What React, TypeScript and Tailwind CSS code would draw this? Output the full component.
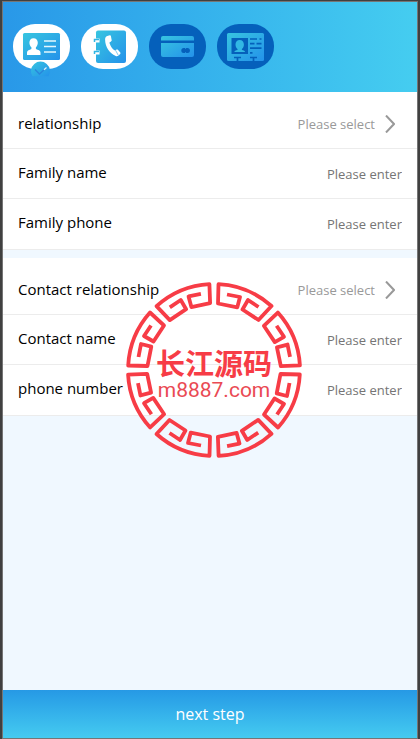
import type { ReactNode } from "react";

function IconGradient({ id }: { id: string }) {
  return (
    <defs>
      <linearGradient id={id} x1="0" y1="0" x2="1" y2="1">
        <stop offset="0" stopColor="#37c5e0" />
        <stop offset="1" stopColor="#2492ea" />
      </linearGradient>
    </defs>
  );
}

function IdCardIcon() {
  return (
    <svg viewBox="0 0 57 53" className="block h-[53px] w-[57px]" aria-hidden="true">
      <IconGradient id="g-id" />
      <rect x="10" y="9" width="37" height="27" rx="1.5" fill="url(#g-id)" />
      <path
        d="M20.5 14.2c2.700 0 4.300 2 4.300 4.600 0 1.900-.8 3.500-1.900 4.500v1.700c2.300.9 4.600 1.600 4.600 3.400V31H14v-2.600c0-1.800 2.300-2.500 4.400-3.400v-1.700c-1.200-1-2-2.600-2-4.500 0-2.600 1.500-4.600 4.100-4.600z"
        fill="#fff"
      />
      <path d="M31 17h12M31 22.500h12M31 28h12" stroke="#e4f7fd" strokeWidth="1.600" />
      <path d="M19.500 52.200a9.500 9.500 0 1 1 16 0z" fill="url(#g-id)" />
      <path d="M22 45.500l4.500 4.500 7-6.500" fill="none" stroke="#2a86dc" strokeWidth="1.300" />
      <path d="M31 45.800l2.500-2.300" stroke="#d8f4fb" strokeWidth="1.300" />
    </svg>
  );
}

function PhoneBookIcon() {
  return (
    <svg viewBox="0 0 57 45" className="block h-[45px] w-[57px]" aria-hidden="true">
      <IconGradient id="g-phone" />
      <path d="M17 6.500h26a2 2 0 0 1 2 2V37a2 2 0 0 1-2 2H17a2 2 0 0 1-2-2V8.500a2 2 0 0 1 2-2z" fill="url(#g-phone)" />
      <path d="M13.500 14.500h5v4h-5zM13.500 26.500h5v4h-5z" fill="#fff" />
      <path d="M18 15.500h-4.500v2.500M18 27.500h-4.500V30" fill="none" stroke="#31b6e4" strokeWidth="1.500" />
      <path
        d="M26.200 12l2.700-.8c.6 0 .9.300 1 .8l.8 4.200c0 .7-.2 1-.7 1.300l-1.500.9c.7 3.700 2.700 6.400 5.500 8.200l1.500-1c.5-.3 1-.3 1.400.1l2.400 2.900c.3.500.3 1-.1 1.300l-2 1.900c-.8.5-1.600.5-2.500.1-6.200-2.700-10.600-9.300-10.600-16.500 0-1.800.7-2.900 2.100-3.400z"
        fill="#fff"
      />
      <path d="M31.200 17.500l-2.600 1.600M34.500 26.200l2.700 5" stroke="#2ea6e6" strokeWidth=".6" />
    </svg>
  );
}

function BankCardIcon() {
  return (
    <svg viewBox="0 0 57 45" className="block h-[45px] w-[57px]" aria-hidden="true">
      <IconGradient id="g-bank" />
      <rect x="12" y="12" width="33" height="21" rx="2" fill="url(#g-bank)" />
      <path d="M12 17.800h33" stroke="#0560bb" strokeWidth="2.400" />
      <rect x="32.300" y="24" width="8.600" height="5" rx="2.500" fill="#0560bb" />
      <path d="M36.600 24v.8M36.600 28.200v.8" stroke="#2a9be6" strokeWidth="1" />
    </svg>
  );
}

function LicenseIcon() {
  return (
    <svg viewBox="0 0 57 45" className="block h-[45px] w-[57px]" aria-hidden="true">
      <IconGradient id="g-license" />
      <rect x="10" y="9" width="37" height="28" rx="1.500" fill="url(#g-license)" />
      <rect x="14.500" y="14" width="16.500" height="16" fill="#0560bb" />
      <path
        d="M22.700 16c2.600 0 4.200 1.900 4.200 4.600 0 2-.9 3.600-2 4.500v.9c1.800.4 3 .9 3.200 2H17.300c.2-1.100 1.400-1.600 3.200-2v-.9c-1.100-.9-2-2.500-2-4.500 0-2.700 1.600-4.600 4.200-4.600z"
        fill="#32b8e4"
      />
      <path
        d="M33 15h7M42.500 15H44.500M33 19.700h4.500M39.500 19.700h5M33 24.200h11.500M33 28.800h2.500M17 33.500h7M20.500 33.500V37M33 33.500h7M36.500 33.500V37"
        stroke="#0560bb"
        strokeWidth="1.700"
      />
    </svg>
  );
}

function Step({ label, done, children }: { label: string; done?: boolean; children: ReactNode }) {
  return (
    <li
      aria-label={label}
      className={done ? "h-[45px] w-[57px] rounded-[22px] bg-white" : "h-[45px] w-[57px] rounded-[22px] bg-[#0560bb]"}
    >
      {children}
    </li>
  );
}

function SelectRow({ id, label }: { id: string; label: string }) {
  return (
    <div className="flex h-[50px] items-center border-b border-[#ececec] pr-[22px] pl-[15px]">
      <label htmlFor={id} className="flex-1 pb-px text-[15px] leading-5 text-black">
        {label}
      </label>
      <select
        id={id}
        defaultValue=""
        className="appearance-none bg-transparent text-right text-[13px] leading-5 text-[#999] outline-none"
      >
        <option value="">Please select</option>
        <option value="parent">Parent</option>
        <option value="friend">Friend</option>
      </select>
      <svg viewBox="0 0 10 18" className="ml-2.5 h-[18px] w-2.5" aria-hidden="true">
        <path d="M1 .5l8 8.500-8 8.500" fill="none" stroke="#999" strokeWidth="2" />
      </svg>
    </div>
  );
}

function InputRow({ id, label, type = "text" }: { id: string; label: string; type?: string }) {
  return (
    <div className="flex h-[50px] items-center border-b border-[#ececec] pr-[15px] pl-[15px] last:h-[51px]">
      <label htmlFor={id} className="pb-1 text-[15px] leading-5 text-black">
        {label}
      </label>
      <input
        id={id}
        type={type}
        placeholder="Please enter"
        className="min-w-0 flex-1 bg-transparent text-right text-[13px] leading-5 text-[#333] outline-none placeholder:text-[#757575]"
      />
    </div>
  );
}

function Seal() {
  return (
    <svg viewBox="-88 -88 176 176" className="h-[176px] w-[176px]" aria-hidden="true">
      <g fill="none" stroke="#f73c46" strokeWidth="3.800" strokeLinejoin="round">
        {[0, 45, 90, 135, 180, 225, 270, 315].map((angle) => (
          <path
            key={angle}
            transform={`rotate(${angle})`}
            d="M13 -75.500L26 -73L23.300 -62.700L4 -66.500L4.500 -85.800A86 86 0 0 1 57.500 -64L44.500 -50L28.500 -60.500L34 -70L44.500 -63"
          />
        ))}
      </g>
      <text
        x="0"
        y="5"
        textAnchor="middle"
        fill="#f73c46"
        fontSize="29"
        className="font-['Noto_Sans_CJK_SC',sans-serif] font-bold"
      >
        长江源码
      </text>
      <text
        x="0"
        y="27"
        textAnchor="middle"
        fill="#ea4a54"
        fontSize="21"
        className="font-[Roboto,sans-serif]"
      >
        m8887.com
      </text>
    </svg>
  );
}

export default function App() {
  return (
    <div className="flex min-h-screen flex-col border-x-2 border-t border-[#404040] bg-[#f0f8ff] font-['Open_Sans','Noto_Sans_CJK_SC',sans-serif]">
      <div className="relative flex flex-1 flex-col border border-[#757575]">
        <header className="h-[90px] bg-linear-to-r from-[#2998e8] to-[#45cdf0] pt-[22px] pl-2.5">
          <ol className="flex gap-[11px]">
            <Step label="Identity" done>
              <IdCardIcon />
            </Step>
            <Step label="Contacts" done>
              <PhoneBookIcon />
            </Step>
            <Step label="Bank card">
              <BankCardIcon />
            </Step>
            <Step label="License">
              <LicenseIcon />
            </Step>
          </ol>
        </header>

        <form className="flex flex-1 flex-col">
          <section className="bg-white pt-[7px]">
            <SelectRow id="relationship" label="relationship" />
            <InputRow id="family-name" label="Family name" />
            <InputRow id="family-phone" label="Family phone" type="tel" />
          </section>
          <section className="mt-2 bg-white pt-[7px]">
            <SelectRow id="contact-relationship" label="Contact relationship" />
            <InputRow id="contact-name" label="Contact name" />
            <InputRow id="phone-number" label="phone number" type="tel" />
          </section>
          <button
            type="button"
            className="mt-auto h-12 w-full bg-linear-to-b from-[#2699e5] to-[#45cbf0] text-base text-white"
          >
            next step
          </button>
        </form>

        <div className="pointer-events-none absolute inset-0 flex items-center justify-center pl-2">
          <Seal />
        </div>
      </div>
    </div>
  );
}
